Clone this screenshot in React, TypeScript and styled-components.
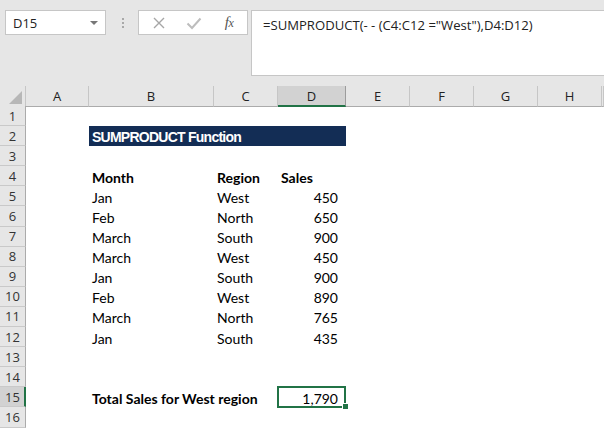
import React from "react";
import styled, { createGlobalStyle, css } from "styled-components";

const GREEN = "#217346";
const COL_TEMPLATE = "26px 63px 125px 64px 68px 64px 64px 64px 64px 1fr";
const ROW_H = "20.1px";

const Global = createGlobalStyle`
  html, body { margin: 0; padding: 0; background: #ffffff; overflow: hidden; }
  * { box-sizing: border-box; }
`;

const Page = styled.div`
  width: 604px;
  height: 428px;
  display: flex;
  flex-direction: column;
  background: #ffffff;
  overflow: hidden;
`;

const TopBar = styled.div`
  height: 86px;
  flex: none;
  background: #e6e6e6;
  display: flex;
  align-items: flex-start;
  padding: 10px 0 0 5px;
`;

const NameBox = styled.div`
  width: 101px;
  height: 25px;
  background: #ffffff;
  border: 1px solid #c6c6c6;
  display: flex;
  align-items: center;
  justify-content: space-between;
  padding: 0 7px 0 7px;
  font-family: "Open Sans", "Noto Sans", sans-serif;
  font-size: 13px;
  color: #222;
`;

const Caret = styled.span`
  width: 0;
  height: 0;
  border-left: 4px solid transparent;
  border-right: 4px solid transparent;
  border-top: 4px solid #777;
  margin-top: 1px;
`;

const Grip = styled.div`
  width: 32px;
  height: 25px;
  display: flex;
  flex-direction: column;
  align-items: center;
  justify-content: center;
  gap: 2px;
  padding-left: 2px;
`;

const GripDot = styled.span`
  width: 2px;
  height: 2px;
  background: #a8a8a8;
`;

const FnButtons = styled.div`
  width: 110px;
  height: 25px;
  background: #ffffff;
  border: 1px solid #c6c6c6;
  display: flex;
  align-items: center;
  padding: 0 0 0 11px;
  gap: 17px;
`;

const FnIcon = styled.span`
  width: 18px;
  height: 18px;
  display: flex;
  align-items: center;
  justify-content: center;
`;

const Fx = styled.span`
  font-family: "Liberation Serif", "DejaVu Serif", serif;
  font-style: italic;
  font-size: 15px;
  color: #555;
  letter-spacing: -0.5px;
  & small {
    font-size: 12px;
  }
`;

const FormulaInput = styled.div`
  flex: 1;
  margin-left: 3px;
  height: 66px;
  background: #ffffff;
  border: 1px solid #c6c6c6;
  border-right: none;
  padding: 5px 0 0 11px;
  font-family: "Open Sans", "Noto Sans", sans-serif;
  font-size: 13.1px;
  color: #222;
  white-space: nowrap;
`;

const Sheet = styled.div`
  flex: 1;
  display: flex;
  flex-direction: column;
`;

const Row = styled.div<{ $header?: boolean }>`
  display: grid;
  grid-template-columns: ${COL_TEMPLATE};
  height: ${(p) => (p.$header ? "20px" : ROW_H)};
  flex: none;
`;

const HeaderBase = css`
  background: #e6e6e6;
  font-family: "Open Sans", "Noto Sans", sans-serif;
  font-size: 13px;
  display: flex;
  align-items: center;
  justify-content: center;
`;

const Corner = styled.div`
  ${HeaderBase};
  border-right: 1px solid #c6c6c6;
  border-bottom: 1px solid #ababab;
  align-items: flex-end;
  justify-content: flex-end;
  padding: 0 3px 2px 0;
`;

const ColHead = styled.div<{ $active?: boolean }>`
  ${HeaderBase};
  color: #222;
  border-right: 1px solid ${(p) => (p.$active ? "#9c9c9c" : "#c6c6c6")};
  border-bottom: ${(p) => (p.$active ? `2px solid ${GREEN}` : "1px solid #ababab")};
  background: ${(p) => (p.$active ? "#d2d2d2" : "#e6e6e6")};
  padding-top: ${(p) => (p.$active ? "1px" : "0")};
`;

const RowHead = styled.div<{ $active?: boolean }>`
  ${HeaderBase};
  color: #333;
  background: ${(p) => (p.$active ? "#d2d2d2" : "#e6e6e6")};
  border-bottom: 1px solid #c9c9c9;
  border-right: ${(p) => (p.$active ? `2px solid ${GREEN}` : "1px solid #ababab")};
  padding-left: ${(p) => (p.$active ? "1px" : "0")};
`;

const Cell = styled.div<{ $bold?: boolean; $right?: boolean; $span?: number }>`
  position: relative;
  grid-column: span ${(p) => p.$span ?? 1};
  display: flex;
  align-items: center;
  justify-content: ${(p) => (p.$right ? "flex-end" : "flex-start")};
  padding: ${(p) => (p.$right ? "2px 8px 0 0" : "2px 0 0 3px")};
  font-family: "Lato", "Open Sans", sans-serif;
  font-size: 14px;
  font-weight: ${(p) => (p.$bold ? 700 : 400)};
  color: #000;
  white-space: nowrap;
  overflow: visible;
  z-index: 1;
`;

const TitleCell = styled.div<{ $span: number }>`
  grid-column: span ${(p) => p.$span};
  background: #132d55;
  color: #ffffff;
  display: flex;
  align-items: center;
  padding: 1px 0 0 3px;
  font-family: "Liberation Sans", Arial, sans-serif;
  font-weight: 700;
  font-size: 14px;
  letter-spacing: -0.75px;
`;

const Selection = styled.div`
  position: absolute;
  left: -1px;
  top: -1px;
  right: 0;
  bottom: -1px;
  border: 2px solid ${GREEN};
  pointer-events: none;
`;

const FillHandle = styled.span`
  position: absolute;
  right: -3px;
  bottom: -3px;
  width: 5px;
  height: 5px;
  background: ${GREEN};
  border: 1px solid #ffffff;
  box-sizing: content-box;
`;

const COLS = ["A", "B", "C", "D", "E", "F", "G", "H", ""];

type Data = { b?: string; c?: string; d?: string; bold?: boolean; dLeft?: boolean };

const rows: Record<number, Data> = {
  4: { b: "Month", c: "Region", d: "Sales", bold: true, dLeft: true },
  5: { b: "Jan", c: "West", d: "450" },
  6: { b: "Feb", c: "North", d: "650" },
  7: { b: "March", c: "South", d: "900" },
  8: { b: "March", c: "West", d: "450" },
  9: { b: "Jan", c: "South", d: "900" },
  10: { b: "Feb", c: "West", d: "890" },
  11: { b: "March", c: "North", d: "765" },
  12: { b: "Jan", c: "South", d: "435" },
};

const Empty = ({ n }: { n: number }) => (
  <>
    {Array.from({ length: n }).map((_, i) => (
      <Cell key={i} />
    ))}
  </>
);

export default function App() {
  const body: React.ReactNode[] = [];
  for (let r = 1; r <= 16; r++) {
    const active = r === 15;
    let content: React.ReactNode;
    if (r === 2) {
      content = (
        <>
          <Cell />
          <TitleCell $span={3}>SUMPRODUCT Function</TitleCell>
          <Empty n={5} />
        </>
      );
    } else if (r === 15) {
      content = (
        <>
          <Cell />
          <Cell $bold>Total Sales for West region</Cell>
          <Cell />
          <Cell $right>
            1,790
            <Selection />
            <FillHandle />
          </Cell>
          <Empty n={5} />
        </>
      );
    } else if (rows[r]) {
      const d = rows[r];
      content = (
        <>
          <Cell />
          <Cell $bold={d.bold}>{d.b}</Cell>
          <Cell $bold={d.bold}>{d.c}</Cell>
          <Cell $bold={d.bold} $right={!d.dLeft}>
            {d.d}
          </Cell>
          <Empty n={5} />
        </>
      );
    } else {
      content = <Empty n={9} />;
    }
    body.push(
      <Row key={r}>
        <RowHead $active={active}>{r}</RowHead>
        {content}
      </Row>
    );
  }

  return (
    <Page>
      <Global />
      <TopBar>
        <NameBox>
          <span>D15</span>
          <Caret />
        </NameBox>
        <Grip>
          <GripDot />
          <GripDot />
          <GripDot />
        </Grip>
        <FnButtons>
          <FnIcon>
            <svg width="14" height="14" viewBox="0 0 14 14">
              <path d="M2 2 L12 12 M12 2 L2 12" stroke="#a6a6a6" strokeWidth="1.4" fill="none" />
            </svg>
          </FnIcon>
          <FnIcon>
            <svg width="16" height="14" viewBox="0 0 16 14">
              <path d="M1.5 7.5 L6 12 L14.5 2.5" stroke="#bdbdbd" strokeWidth="2" fill="none" />
            </svg>
          </FnIcon>
          <FnIcon>
            <Fx>
              f<small>x</small>
            </Fx>
          </FnIcon>
        </FnButtons>
        <FormulaInput>=SUMPRODUCT(- - (C4:C12 ="West"),D4:D12)</FormulaInput>
      </TopBar>
      <Sheet>
        <Row $header>
          <Corner>
            <svg width="13" height="13" viewBox="0 0 13 13">
              <polygon points="13,0 13,13 0,13" fill="#b7b7b7" />
            </svg>
          </Corner>
          {COLS.map((c) => (
            <ColHead key={c || "x"} $active={c === "D"}>
              {c}
            </ColHead>
          ))}
        </Row>
        {body}
      </Sheet>
    </Page>
  );
}
